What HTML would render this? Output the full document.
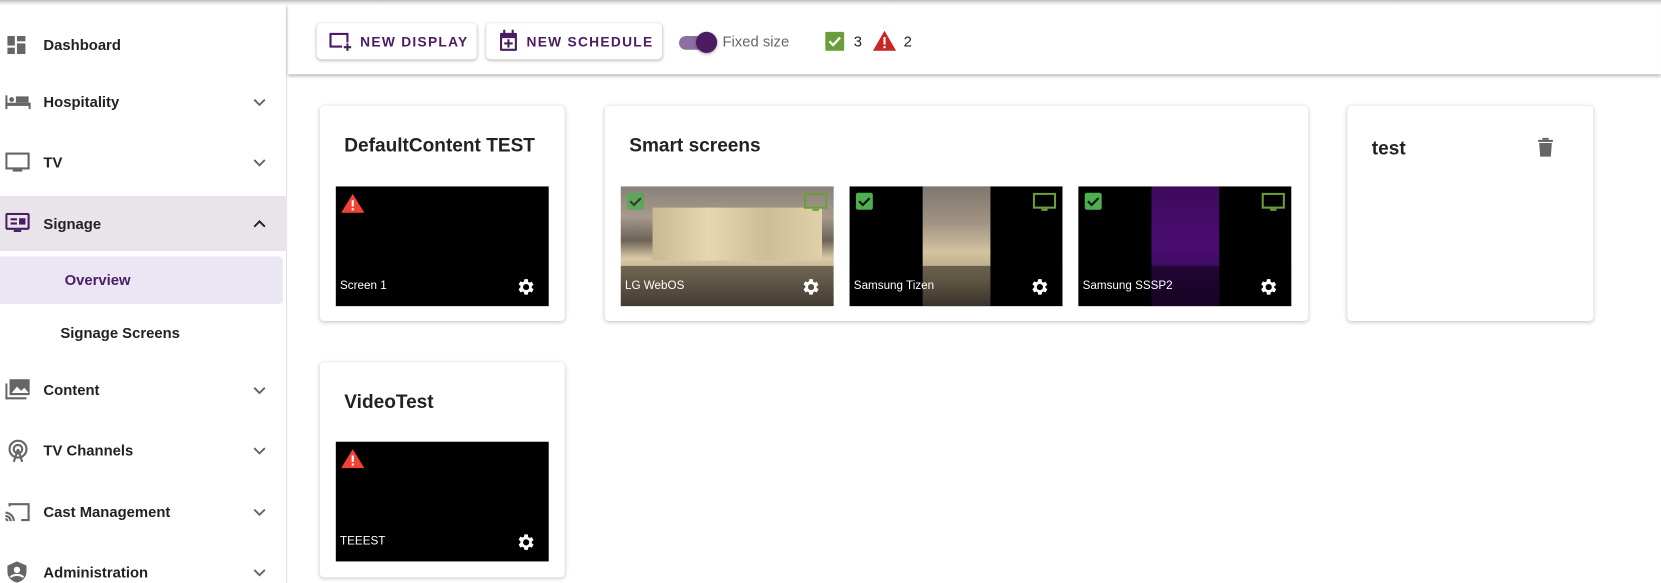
<!DOCTYPE html>
<html><head><meta charset="utf-8"><style>
*{box-sizing:border-box;margin:0;padding:0}
html,body{width:1661px;height:583px;overflow:hidden;background:#fff}
body{font-family:"Liberation Sans",sans-serif;color:#222}
#w{position:relative;width:1568px;height:551px;transform:scale(1.0593);transform-origin:0 0}
.a{position:absolute}
.topline{left:0;top:0;width:1568px;height:5px;background:linear-gradient(#bbb,#ddd 40%,#fff)}
.side{left:0;top:5px;width:271px;height:546px;border-right:1px solid #e0e0e0;background:#fff}
.item{position:absolute;left:41px;font-size:14px;font-weight:bold;color:#222;transform:translateY(-50%)}
.chev{position:absolute;left:238px;width:14px;height:10px}
.ico{position:absolute;left:5px}
.toolbar{left:272px;top:5px;width:1296px;height:65px;background:#fff;box-shadow:0 2px 3px rgba(0,0,0,.25)}
.btn{position:absolute;top:22px;height:34px;background:#fff;border-radius:4px;box-shadow:0 1px 3px rgba(0,0,0,.3);color:#4a1d63;font-size:13px;font-weight:bold;letter-spacing:1.2px;display:flex;align-items:center}
.card{position:absolute;background:#fff;border-radius:4px;box-shadow:0 1px 4px rgba(0,0,0,.22)}
.title{position:absolute;font-size:18px;font-weight:bold;color:#222}
.th{position:absolute;width:201px;height:113px;background:#000;overflow:hidden}
.band{position:absolute;left:0;bottom:0;width:100%;height:38px;background:rgba(0,0,0,.45)}
.lbl{position:absolute;left:4px;bottom:13px;color:#fff;font-size:11px}
.gear{position:absolute;right:12px;bottom:8px}
.chk{position:absolute;left:6px;top:6px;width:16px;height:16px;background:#4caf50;border-radius:2px}
.mon{position:absolute;right:6px;top:6px}
</style></head><body><div id="w">
<div class="a topline"></div>
<div class="a side"></div>
<div class="a" style="left:0;top:185px;width:271px;height:52px;background:#e9e3ea"></div>
<div class="a" style="left:0;top:242px;width:267px;height:45px;background:#ebe6f4;border-radius:0 4px 4px 0"></div>

<svg class="ico" style="top:32px" width="22" height="20" viewBox="0 0 22 20"><rect x="2" y="2" width="7" height="9" fill="#666"/><rect x="11" y="2" width="8" height="5" fill="#666"/><rect x="2" y="13" width="7" height="6" fill="#666"/><rect x="11" y="9" width="8" height="10" fill="#666"/></svg>
<div class="item" style="top:42px">Dashboard</div>
<svg class="ico" style="top:88px" width="24" height="16" viewBox="0 0 24 16"><rect x="0" y="2" width="2" height="13" fill="#666"/><circle cx="6" cy="6" r="2.3" fill="#666"/><rect x="10" y="3" width="12" height="6" fill="#666"/><rect x="0" y="9" width="24" height="3" fill="#666"/><rect x="22" y="9" width="2" height="6" fill="#666"/></svg>
<div class="item" style="top:96px">Hospitality</div>
<svg class="ico" style="top:144px" width="24" height="20" viewBox="0 0 24 20"><rect x="1" y="1" width="21" height="14" fill="none" stroke="#666" stroke-width="2"/><rect x="7" y="16" width="9" height="2" fill="#666"/></svg>
<div class="item" style="top:153px">TV</div>
<svg class="ico" style="top:201px" width="24" height="20" viewBox="0 0 24 20"><rect x="1" y="1" width="21" height="14" rx="1" fill="none" stroke="#4a1d63" stroke-width="2"/><rect x="5" y="5" width="6" height="2" fill="#4a1d63"/><rect x="5" y="9" width="6" height="2" fill="#4a1d63"/><rect x="13" y="5" width="6" height="6" fill="#4a1d63"/><rect x="8" y="16" width="7" height="2" fill="#4a1d63"/></svg>
<div class="item" style="top:211px">Signage</div>
<div class="item" style="top:264px;left:61px;color:#4a1d63">Overview</div>
<div class="item" style="top:314px;left:57px">Signage Screens</div>
<svg class="ico" style="top:357px" width="24" height="22" viewBox="0 0 24 22"><rect x="0" y="5" width="2" height="15" fill="#666"/><rect x="0" y="18" width="20" height="2" fill="#666"/><rect x="4" y="1" width="19" height="15" fill="#666"/><path d="M6 14l5-6 4 4 3-3 4 5z" fill="#fff"/></svg>
<div class="item" style="top:368px">Content</div>
<svg class="ico" style="top:415px" width="24" height="22" viewBox="0 0 24 22"><circle cx="12" cy="9" r="8" fill="none" stroke="#666" stroke-width="2"/><circle cx="12" cy="9" r="4" fill="none" stroke="#666" stroke-width="2"/><path d="M12 9l-4 12M12 9l4 12" stroke="#666" stroke-width="2"/></svg>
<div class="item" style="top:425px">TV Channels</div>
<svg class="ico" style="top:474px" width="24" height="20" viewBox="0 0 24 20"><path d="M4 4V2h18v15h-7" fill="none" stroke="#666" stroke-width="2"/><path d="M0 10a8 8 0 018 8M0 13a5 5 0 015 5M0 16a2 2 0 012 2" fill="none" stroke="#666" stroke-width="2"/></svg>
<div class="item" style="top:483px">Cast Management</div>
<svg class="ico" style="top:529px" width="24" height="22" viewBox="0 0 24 22"><path d="M11 1l9 4v6c0 5-4 9-9 10-5-1-9-5-9-10V5z" fill="#666"/><circle cx="11" cy="9" r="3" fill="#fff"/><path d="M5 16c2-3 10-3 12 0" stroke="#fff" stroke-width="2" fill="none"/></svg>
<div class="item" style="top:540px">Administration</div>

<svg class="chev" style="top:92px" viewBox="0 0 14 10"><path d="M2 2l5 5 5-5" stroke="#666" stroke-width="1.8" fill="none"/></svg>
<svg class="chev" style="top:149px" viewBox="0 0 14 10"><path d="M2 2l5 5 5-5" stroke="#666" stroke-width="1.8" fill="none"/></svg>
<svg class="chev" style="top:206px" viewBox="0 0 14 10"><path d="M2 8l5-5 5 5" stroke="#222" stroke-width="1.8" fill="none"/></svg>
<svg class="chev" style="top:364px" viewBox="0 0 14 10"><path d="M2 2l5 5 5-5" stroke="#666" stroke-width="1.8" fill="none"/></svg>
<svg class="chev" style="top:421px" viewBox="0 0 14 10"><path d="M2 2l5 5 5-5" stroke="#666" stroke-width="1.8" fill="none"/></svg>
<svg class="chev" style="top:479px" viewBox="0 0 14 10"><path d="M2 2l5 5 5-5" stroke="#666" stroke-width="1.8" fill="none"/></svg>
<svg class="chev" style="top:536px" viewBox="0 0 14 10"><path d="M2 2l5 5 5-5" stroke="#666" stroke-width="1.8" fill="none"/></svg>

<div class="a toolbar"></div>
<div class="btn" style="left:299px;width:151px"><svg style="margin-left:11px;margin-right:8px" width="22" height="20" viewBox="0 0 22 20"><path d="M13 15H2V3h16v8" fill="none" stroke="#4a1d63" stroke-width="2"/><path d="M18 12v7M14.5 15.5h7" stroke="#4a1d63" stroke-width="2"/></svg>NEW DISPLAY</div>
<div class="btn" style="left:459px;width:166px"><svg style="margin-left:12px;margin-right:8px" width="18" height="22" viewBox="0 0 18 22"><rect x="1" y="3" width="16" height="17" rx="1" fill="#4a1d63"/><rect x="3" y="8" width="12" height="10" fill="#fff"/><rect x="4" y="0" width="2" height="4" fill="#4a1d63"/><rect x="12" y="0" width="2" height="4" fill="#4a1d63"/><path d="M9 9v8M5 13h8" stroke="#4a1d63" stroke-width="2"/></svg>NEW SCHEDULE</div>
<div class="a" style="left:641px;top:34px;width:34px;height:13px;border-radius:7px;background:#8c6fa3"></div>
<div class="a" style="left:657px;top:30px;width:20px;height:20px;border-radius:50%;background:#4a1d63;box-shadow:0 1px 3px rgba(0,0,0,.35)"></div>
<div class="a" style="left:682px;top:31px;font-size:14px;color:#666">Fixed size</div>
<svg class="a" style="left:779px;top:30px" width="18" height="18" viewBox="0 0 18 18"><rect width="18" height="18" rx="1" fill="#6a9e3a"/><path d="M4 9l3.5 3.5L14 5.5" stroke="#fff" stroke-width="2.2" fill="none"/></svg>
<div class="a" style="left:806px;top:31px;font-size:14px;color:#222">3</div>
<svg class="a" style="left:824px;top:29px" width="22" height="19" viewBox="0 0 22 19"><path d="M11 0L22 19H0z" fill="#c62828"/><rect x="10" y="6" width="2" height="7" fill="#fff"/><rect x="10" y="14.5" width="2" height="2" fill="#fff"/></svg>
<div class="a" style="left:853px;top:31px;font-size:14px;color:#222">2</div>

<div class="card" style="left:302px;top:100px;width:231px;height:203px"></div>
<div class="title" style="left:325px;top:127px">DefaultContent TEST</div>
<div class="th" style="left:317px;top:176px">
<svg style="position:absolute;left:5px;top:7px" width="22" height="18" viewBox="0 0 22 18"><path d="M11 0L22 18H0z" fill="#f44336"/><rect x="10" y="6" width="2" height="6" fill="#fff"/><rect x="10" y="13.5" width="2" height="2" fill="#fff"/></svg>
<div class="lbl">Screen 1</div>
<svg class="gear" width="20" height="20" viewBox="0 0 24 24"><path fill="#fff" d="M19.1 12.9a7 7 0 000-1.8l2.1-1.6-2-3.5-2.5 1a7 7 0 00-1.6-.9L14.8 3h-4l-.4 2.6a7 7 0 00-1.6.9l-2.5-1-2 3.5 2.1 1.6a7 7 0 000 1.8L4.3 14.5l2 3.5 2.5-1a7 7 0 001.6.9l.4 2.6h4l.4-2.6a7 7 0 001.6-.9l2.5 1 2-3.5zM12.8 15.5a3.5 3.5 0 110-7 3.5 3.5 0 010 7z"/></svg>
</div>

<div class="card" style="left:571px;top:100px;width:664px;height:203px"></div>
<div class="title" style="left:594px;top:127px">Smart screens</div>
<div class="th" style="left:586px;top:176px;background:linear-gradient(180deg,#8a8078 0%,#a59a8c 25%,#6d6258 45%,#d9c9a4 60%,#b8a888 75%,#7a6c5a 100%)">
<div style="position:absolute;left:30px;top:20px;width:160px;height:50px;background:linear-gradient(90deg,#c9b991,#e6d7b0,#cdbd95,#e0d0a8)"></div>
<div class="band"></div>
<div class="chk" style="opacity:.8"><svg width="16" height="16"><path d="M3 8l3.5 3.5L13 5" stroke="#222" stroke-width="2" fill="none"/></svg></div>
<svg class="mon" width="22" height="18" viewBox="0 0 22 18"><rect x="1" y="1" width="20" height="13" fill="none" stroke="#6a9e3a" stroke-width="2"/><rect x="8" y="15" width="6" height="2" fill="#6a9e3a"/></svg>
<div class="lbl">LG WebOS</div>
<svg class="gear" width="20" height="20" viewBox="0 0 24 24"><path fill="#fff" d="M19.1 12.9a7 7 0 000-1.8l2.1-1.6-2-3.5-2.5 1a7 7 0 00-1.6-.9L14.8 3h-4l-.4 2.6a7 7 0 00-1.6.9l-2.5-1-2 3.5 2.1 1.6a7 7 0 000 1.8L4.3 14.5l2 3.5 2.5-1a7 7 0 001.6.9l.4 2.6h4l.4-2.6a7 7 0 001.6-.9l2.5 1 2-3.5zM12.8 15.5a3.5 3.5 0 110-7 3.5 3.5 0 010 7z"/></svg>
</div>
<div class="th" style="left:802px;top:176px">
<div style="position:absolute;left:69px;top:0;width:64px;height:113px;background:linear-gradient(180deg,#7f776e,#a09383 30%,#d3c39f 55%,#a89878 80%,#6a5d4e)"></div>
<div class="band"></div>
<div class="chk"><svg width="16" height="16"><path d="M3 8l3.5 3.5L13 5" stroke="#111" stroke-width="2" fill="none"/></svg></div>
<svg class="mon" width="22" height="18" viewBox="0 0 22 18"><rect x="1" y="1" width="20" height="13" fill="none" stroke="#6a9e3a" stroke-width="2"/><rect x="8" y="15" width="6" height="2" fill="#6a9e3a"/></svg>
<div class="lbl">Samsung Tizen</div>
<svg class="gear" width="20" height="20" viewBox="0 0 24 24"><path fill="#fff" d="M19.1 12.9a7 7 0 000-1.8l2.1-1.6-2-3.5-2.5 1a7 7 0 00-1.6-.9L14.8 3h-4l-.4 2.6a7 7 0 00-1.6.9l-2.5-1-2 3.5 2.1 1.6a7 7 0 000 1.8L4.3 14.5l2 3.5 2.5-1a7 7 0 001.6.9l.4 2.6h4l.4-2.6a7 7 0 001.6-.9l2.5 1 2-3.5zM12.8 15.5a3.5 3.5 0 110-7 3.5 3.5 0 010 7z"/></svg>
</div>
<div class="th" style="left:1018px;top:176px">
<div style="position:absolute;left:69px;top:0;width:64px;height:113px;background:linear-gradient(180deg,#3d0a5c,#4a0d73 50%,#2a0840)"></div>
<div class="band"></div>
<div class="chk"><svg width="16" height="16"><path d="M3 8l3.5 3.5L13 5" stroke="#111" stroke-width="2" fill="none"/></svg></div>
<svg class="mon" width="22" height="18" viewBox="0 0 22 18"><rect x="1" y="1" width="20" height="13" fill="none" stroke="#6a9e3a" stroke-width="2"/><rect x="8" y="15" width="6" height="2" fill="#6a9e3a"/></svg>
<div class="lbl">Samsung SSSP2</div>
<svg class="gear" width="20" height="20" viewBox="0 0 24 24"><path fill="#fff" d="M19.1 12.9a7 7 0 000-1.8l2.1-1.6-2-3.5-2.5 1a7 7 0 00-1.6-.9L14.8 3h-4l-.4 2.6a7 7 0 00-1.6.9l-2.5-1-2 3.5 2.1 1.6a7 7 0 000 1.8L4.3 14.5l2 3.5 2.5-1a7 7 0 001.6.9l.4 2.6h4l.4-2.6a7 7 0 001.6-.9l2.5 1 2-3.5zM12.8 15.5a3.5 3.5 0 110-7 3.5 3.5 0 010 7z"/></svg>
</div>

<div class="card" style="left:1272px;top:100px;width:232px;height:203px"></div>
<div class="title" style="left:1295px;top:130px">test</div>
<svg class="a" style="left:1452px;top:130px" width="14" height="18" viewBox="0 0 14 18"><rect x="0" y="2" width="14" height="2" fill="#666"/><rect x="4" y="0" width="6" height="2" fill="#666"/><path d="M1 5h12l-1 13H2z" fill="#666"/></svg>

<div class="card" style="left:302px;top:342px;width:231px;height:203px"></div>
<div class="title" style="left:325px;top:369px">VideoTest</div>
<div class="th" style="left:317px;top:417px">
<svg style="position:absolute;left:5px;top:7px" width="22" height="18" viewBox="0 0 22 18"><path d="M11 0L22 18H0z" fill="#f44336"/><rect x="10" y="6" width="2" height="6" fill="#fff"/><rect x="10" y="13.5" width="2" height="2" fill="#fff"/></svg>
<div class="lbl">TEEEST</div>
<svg class="gear" width="20" height="20" viewBox="0 0 24 24"><path fill="#fff" d="M19.1 12.9a7 7 0 000-1.8l2.1-1.6-2-3.5-2.5 1a7 7 0 00-1.6-.9L14.8 3h-4l-.4 2.6a7 7 0 00-1.6.9l-2.5-1-2 3.5 2.1 1.6a7 7 0 000 1.8L4.3 14.5l2 3.5 2.5-1a7 7 0 001.6.9l.4 2.6h4l.4-2.6a7 7 0 001.6-.9l2.5 1 2-3.5zM12.8 15.5a3.5 3.5 0 110-7 3.5 3.5 0 010 7z"/></svg>
</div>
</div></body></html>
